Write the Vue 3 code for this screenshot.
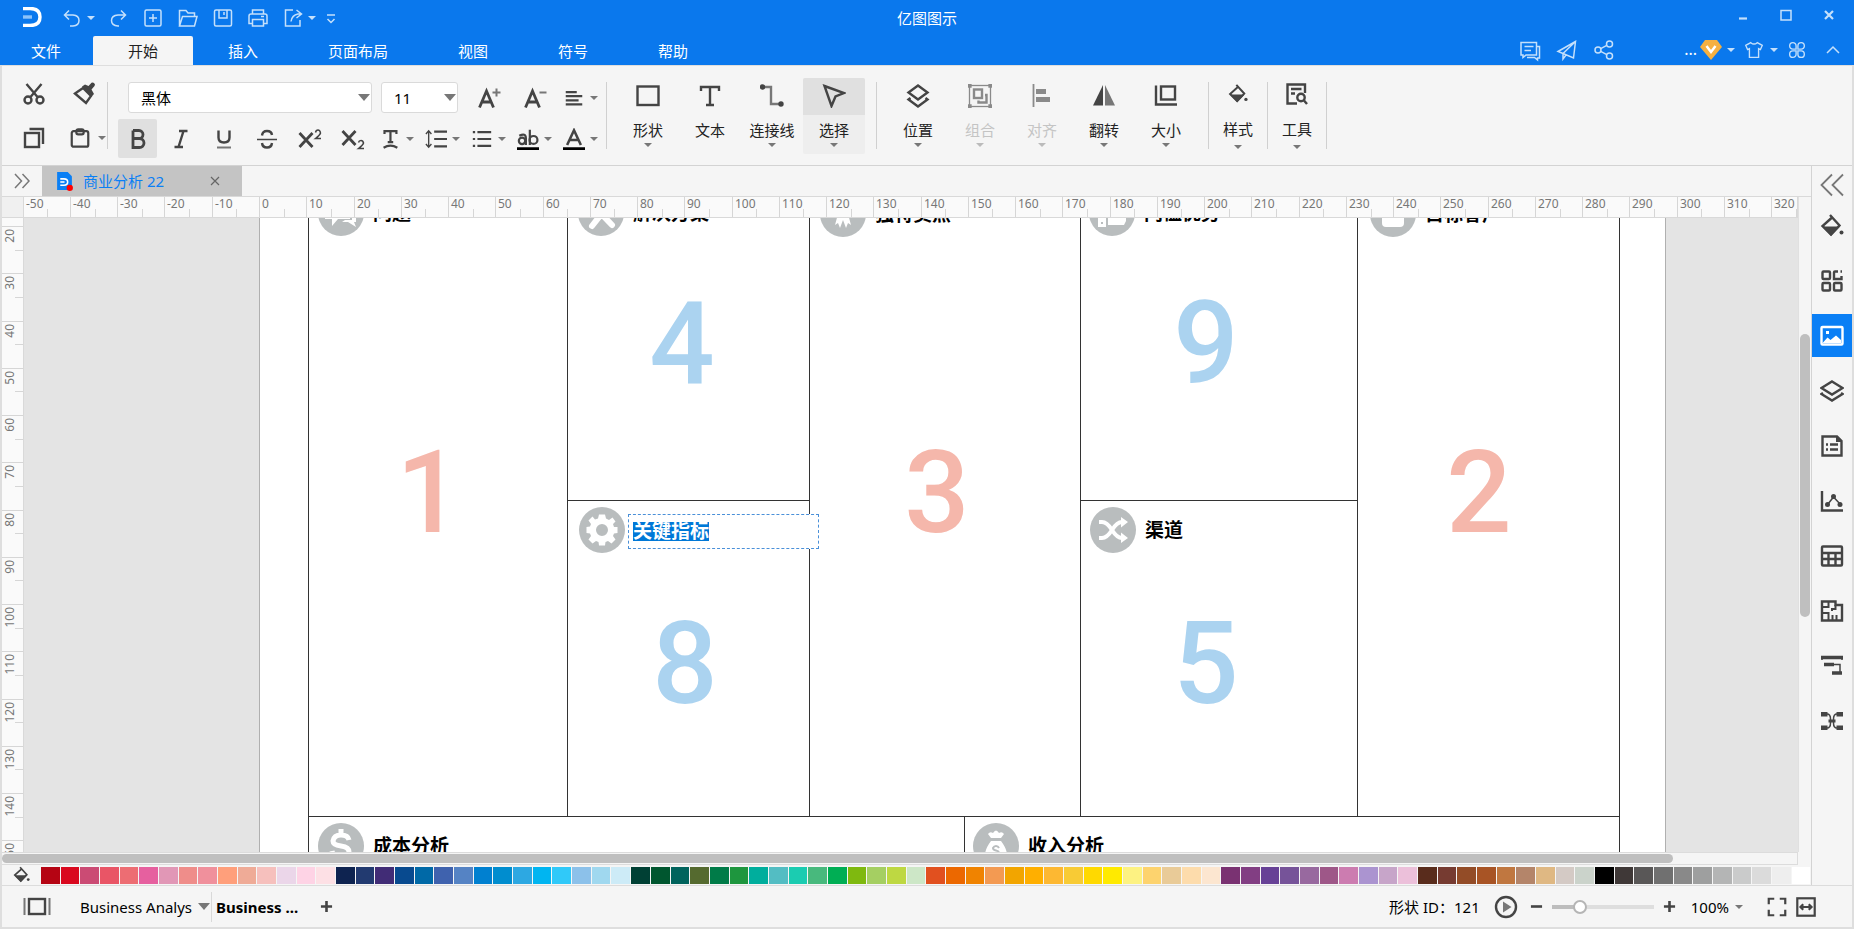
<script setup>
import { ref } from 'vue'

const quickTools = [
  { id: 'undo', label: '撤销', menu: true },
  { id: 'redo', label: '重做' },
  { id: 'new', label: '新建' },
  { id: 'open', label: '打开' },
  { id: 'save', label: '保存' },
  { id: 'print', label: '打印' },
  { id: 'export', label: '导出', menu: true },
]
const menus = ['文件', '开始', '插入', '页面布局', '视图', '符号', '帮助']
const activeMenu = ref('开始')
const font = ref('黑体')
const size = ref('11')
const zoom = ref(24)

const textTools = [
  { id: 'bold', label: '加粗', on: true },
  { id: 'italic', label: '斜体' },
  { id: 'underline', label: '下划线' },
  { id: 'strike', label: '删除线' },
  { id: 'sup', label: '上标' },
  { id: 'sub', label: '下标' },
]
const textMenus = [
  { id: 'tcurve', label: '文本效果' },
  { id: 'lineheight', label: '行距' },
  { id: 'list', label: '项目符号' },
  { id: 'highlight', label: '突出显示' },
  { id: 'fontcolor', label: '字体颜色' },
]
const drawTools = [
  { id: 'shape', label: '形状', menu: true },
  { id: 'text', label: '文本' },
  { id: 'connector', label: '连接线', menu: true },
  { id: 'select', label: '选择', menu: true, on: true },
]
const arrangeTools = [
  { id: 'position', label: '位置', menu: true },
  { id: 'group', label: '组合', menu: true, off: true },
  { id: 'align', label: '对齐', menu: true, off: true },
  { id: 'flip', label: '翻转', menu: true },
  { id: 'size', label: '大小', menu: true },
]
const railTools = [
  { id: 'bucket', label: '填充' },
  { id: 'symbols', label: '符号库' },
  { id: 'image', label: '图片', on: true },
  { id: 'layers', label: '图层' },
  { id: 'notes', label: '页面' },
  { id: 'chart', label: '图表' },
  { id: 'table', label: '表格' },
  { id: 'floor', label: '平面图' },
  { id: 'gantt', label: '甘特图' },
  { id: 'mind', label: '思维导图' },
]

const MM = 4.7256
const hMajor = []
const hMinor = []
for (let v = -50; v <= 320; v += 10) {
  hMajor.push({ v, p: Math.round(236 + v * MM) })
  hMinor.push(Math.round(236 + (v + 5) * MM))
}
const vMajor = []
const vMinor = []
for (let v = 20; v <= 150; v += 10) {
  vMajor.push({ v, p: Math.round(8 + (v - 20) * MM) })
  vMinor.push(Math.round(8 + (v - 15) * MM))
}

const lines = [
  'M308.5 0V929', 'M567.5 0V816', 'M809.5 0V816', 'M1080.5 0V816', 'M1357.5 0V816', 'M1619.5 0V929',
  'M567.5 500.5H809.5', 'M1080.5 500.5H1357.5', 'M308.5 816.5H1619.5', 'M964.5 816.5V929',
]
const topics = [
  { id: 't-chat', x: 341, y: 213, label: '问题' },
  { id: 't-tools', x: 601, y: 213, label: '解决方案' },
  { id: 't-award', x: 843, y: 214, label: '独特卖点' },
  { id: 't-thumb', x: 1112, y: 213, label: '门槛优势' },
  { id: 't-user', x: 1393, y: 214, label: '目标客户' },
  { id: 't-gear', x: 602, y: 530, label: '' },
  { id: 't-shuffle', x: 1113, y: 530, label: '渠道' },
  { id: 't-dollar', x: 341, y: 846, label: '成本分析' },
  { id: 't-bag', x: 996, y: 846, label: '收入分析' },
]
const numbers = [
  { n: '4', x: 682, y: 383, c: 'blue' },
  { n: '9', x: 1206, y: 383, c: 'blue' },
  { n: '1', x: 429, y: 532, c: 'red' },
  { n: '3', x: 937, y: 532, c: 'red' },
  { n: '2', x: 1479, y: 532, c: 'red' },
  { n: '8', x: 685, y: 703, c: 'blue' },
  { n: '5', x: 1206, y: 703, c: 'blue' },
]

const swatches = (
  'b50413 d9081e cb4b74 e95566 ed6d73 e6609f e197b6 ef8d8a f0909c ff9f7b efab97 f6c0bd ebd6e9 fed3e5 fde0e5 ' +
  '0e2350 223a70 412c76 084a8f 0069a7 3f62ae 5583c4 0080d0 008dcf 2da8e2 00b5f1 30c9f9 8cc1ea a0d8ef cdebf7 ' +
  '004034 00562f 00635c 556a2f 007b48 1e963e 00ae9d 53bdc3 1bccb1 48b97d 00ae54 7fb90f a5cf62 bed842 cde7c7 ' +
  'e1501f ec6800 f08300 f39a52 f2a500 ffaf00 fdb832 f8cb35 ffd900 ffea00 fdf282 fdd36e e9cb98 fddcac fce6d0 ' +
  '7a3272 823e83 674196 765399 98699f 9e5788 cc7cb0 ab94d0 c7a5c9 ecc0da ' +
  '592c1c 763b31 934c27 a85425 c07740 b4856a dfb883 d4cac5 cbd3cb ' +
  '000000 3f3837 595757 707070 898989 9e9f9f b4b5b5 cacbcb dbdbdb eeeeee ffffff'
).split(' ')
</script>

<template>
  <div class="app">
    <svg class="sprite" aria-hidden="true">
      <symbol id="undo" viewBox="0 0 24 24"><path d="M9 4.500L4.500 9L9 13.500M4.500 9H13Q19 9.500 19 14.500T13 20H10" /></symbol>
      <symbol id="redo" viewBox="0 0 24 24"><path d="M15 4.500L19.500 9L15 13.500M19.500 9H12Q5.500 9.500 5.500 14.500T12 20H13" /></symbol>
      <symbol id="new" viewBox="0 0 24 24"><rect x="4" y="4" width="16" height="16" rx="1.500" /><path d="M12 8V16M8 12H16" /></symbol>
      <symbol id="open" viewBox="0 0 24 24"><path d="M3.500 20V4.500H10L12 7H18.500V10M3.500 20L6.500 10.500H21L18.500 20Z" /></symbol>
      <symbol id="save" viewBox="0 0 24 24"><rect x="3.500" y="4" width="17" height="16" rx="1.500" /><path d="M8 4V12H16V4M13 6V9" /></symbol>
      <symbol id="print" viewBox="0 0 24 24"><path d="M6.500 8V4H17.500V8M6 17.500H3V10Q3 8 5 8H19Q21 8 21 10V17.500H18M6.500 13.500H17.500V20H6.500ZM15 10.500H18" /></symbol>
      <symbol id="export" viewBox="0 0 24 24"><path d="M12 4H4.500V20H19V14M15.500 4L20.500 8L15.500 12M20 8H17Q11 9 10 15.500" /></symbol>
      <symbol id="custom" viewBox="0 0 24 24"><path d="M8 9H16M8.500 13L12 16.500L15.500 13" /></symbol>
      <symbol id="comment" viewBox="0 0 24 24"><path d="M3 4.500H18.500V17H8L5 19.500V17H3ZM18.500 8.500H21.500V20H19.500V22L16.500 19.500H9M6.500 8.500H15.500M6.500 12.500H13" /></symbol>
      <symbol id="plane" viewBox="0 0 24 24"><path d="M20.500 3.500L3 13.500L8 15.500L18.500 20ZM20.500 3.500L8 15.500V21L11 17" /></symbol>
      <symbol id="share" viewBox="0 0 24 24"><circle cx="6" cy="12" r="3" /><circle cx="17.500" cy="6" r="3" /><circle cx="17.500" cy="18" r="3" /><path d="M8.700 10.600L14.800 7.400M8.700 13.400L14.800 16.600" /></symbol>
      <symbol id="shirt" viewBox="0 0 24 24"><path d="M8.500 4Q12 7 15.500 4L21 7L19 11.500L17 10.500V20H7V10.500L5 11.500L3 7Z" /></symbol>
      <symbol id="apps" viewBox="0 0 24 24"><path d="M11 11H7.500A3.500 3.500 0 1 1 11 7.500ZM13 11H16.500A3.500 3.500 0 1 0 13 7.500ZM11 13H7.500A3.500 3.500 0 1 0 11 16.500ZM13 13H16.500A3.500 3.500 0 1 1 13 16.500Z" /></symbol>

      <symbol id="cut" viewBox="0 0 24 24"><path d="M4.500 2L15.500 15M19.500 2L8.500 15" /><circle cx="6" cy="18" r="3.500" /><circle cx="18" cy="18" r="3.500" /></symbol>
      <symbol id="painter" viewBox="0 0 24 24"><path d="M3 11.500L11 6L19 14L14 21Z" /><path class="fillonly" d="M10 4.500L13 2.500L16.500 4L19.500 0.800Q22 0 23 2.500L22.500 4L19.500 7.500L22 12L19 15Z" /></symbol>
      <symbol id="copy" viewBox="0 0 24 24"><rect x="3" y="7" width="14" height="14" /><path d="M7.500 3H21V18" /></symbol>
      <symbol id="paste" viewBox="0 0 24 24"><rect x="3" y="4.500" width="18" height="17" rx="2" /><rect x="8" y="2.500" width="8" height="5.500" rx="2" /></symbol>
      <symbol id="grow" viewBox="0 0 24 24"><path class="fat" d="M2.500 21.500L9.500 5L16.500 21.500M5 16H14" /><path class="grey2" d="M19.500 2.500V10.500M15.500 6.500H23.500" /></symbol>
      <symbol id="shrink" viewBox="0 0 24 24"><path class="fat" d="M2.500 21.500L9.500 5L16.500 21.500M5 16H14" /><path class="grey2" d="M16.500 6.500H23.500" /></symbol>
      <symbol id="para" viewBox="0 0 24 24"><path d="M3 5.500H15M3 10H21M3 14.500H17M3 19H21" /></symbol>
      <symbol id="bold" viewBox="0 0 24 24"><path class="fat" d="M7 3.500V20.500H13.500A4.500 4.500 0 0 0 13.500 11.500H7M13 11.500A4 4 0 0 0 13 3.500H7" /></symbol>
      <symbol id="italic" viewBox="0 0 24 24"><path d="M10 4H18.500M5.500 20H14M14.500 4L9.500 20" /></symbol>
      <symbol id="underline" viewBox="0 0 24 24"><path d="M6.500 3.500V10.500Q6.500 15.500 12 15.500T17.500 10.500V3.500" /><path class="grey2" d="M5 20.500H19" /></symbol>
      <symbol id="strike" viewBox="0 0 24 24"><path d="M17 8Q16.500 4 12 4Q7.500 4 7 8.500M7 16Q7.500 20.500 12 20.500T17 16" /><path class="thin" d="M2 12.500H22" /></symbol>
      <symbol id="sup" viewBox="0 0 24 24"><path class="fat" d="M1.500 6L14.500 20M14.500 6L1.500 20" /><path class="thin" d="M17.500 5.500Q18 3 20 3T22.500 6Q22 8 17.500 11.500H23" /></symbol>
      <symbol id="sub" viewBox="0 0 24 24"><path class="fat" d="M1.500 4L14.500 18M14.500 4L1.500 18" /><path class="thin" d="M17.500 15.500Q18 13.500 20 13.500T22.500 16Q22 18 17.500 21.500H23" /></symbol>
      <symbol id="tcurve" viewBox="0 0 24 24"><path d="M6 6.500V3.500H19V6.500M12.500 4V15.500M9.500 15.500H15.500" /><path d="M5 21.500Q12.500 17 20 21.500" /></symbol>
      <symbol id="lineheight" viewBox="0 0 24 24"><path d="M10 4H24M10 12H24M10 20H24" /><path class="thin" d="M4 3V21M1 6.500L4 3L7 6.500M1 17.500L4 21L7 17.500" /></symbol>
      <symbol id="list" viewBox="0 0 24 24"><path d="M2 4.500H4.500M2 12H4.500M2 19.500H4.500M7 4.500H22M7 12H22M7 19.500H22" /></symbol>
      <symbol id="highlight" viewBox="0 0 24 24"><circle cx="5.500" cy="14" r="3.500" /><path d="M2.500 8.500Q9.500 5 9.700 11V18.500M14 2V18.500" /><circle cx="18" cy="13" r="4.300" /><path class="bar" d="M0 22.500H24" /></symbol>
      <symbol id="fontcolor" viewBox="0 0 24 24"><path class="fat" d="M4.500 18.500L12 2.500L19.500 18.500M7 13H17" /><path class="bar" d="M0 22.500H24" /></symbol>

      <symbol id="shape" viewBox="0 0 24 24"><rect x="1.500" y="2.500" width="21" height="18.500" /></symbol>
      <symbol id="text" viewBox="0 0 24 24"><path d="M3 7V3H21V7M12 3V21M8 21H16" /></symbol>
      <symbol id="connector" viewBox="0 0 24 24"><path class="grey" d="M3 3H11V20H20" /><circle class="solid" cx="2.500" cy="3" r="1.500" /><circle class="solid" cx="21" cy="20" r="1.500" /></symbol>
      <symbol id="select" viewBox="0 0 24 24"><path d="M2.500 2L22 9L13.500 12.500L9.500 22Z" /></symbol>
      <symbol id="position" viewBox="0 0 24 24"><path d="M12 1.500L21.500 8.500L12 15.500L2.500 8.500ZM4.500 14L2.500 15.500L12 22.500L21.500 15.500L19.500 14" /></symbol>
      <symbol id="group" viewBox="0 0 24 24"><g stroke-width="1.300"><rect x="1.500" y="1.500" width="21" height="21" /><path class="solid" d="M0 0H3V3H0ZM21 0H24V3H21ZM0 21H3V24H0ZM21 21H24V24H21Z" /></g><rect x="6" y="5.500" width="8" height="8.500" /><path d="M17 11H18.500V18.500H10.500V16.500" /></symbol>
      <symbol id="align" viewBox="0 0 24 24"><path d="M3.500 0V23" stroke-width="1.800" /><path class="fillonly" d="M6 5H16V10H6ZM6 13H20V18H6Z" /></symbol>
      <symbol id="flip" viewBox="0 0 24 24"><path class="fillonly" d="M11 1V21.500H1Z" /><path class="fillgrey" d="M13 1V21.500H23Z" /></symbol>
      <symbol id="size" viewBox="0 0 24 24"><rect x="7" y="2.500" width="14" height="13" /><path d="M2 1.500V20.500H23" /></symbol>
      <symbol id="bucket" viewBox="0 0 24 24"><path d="M10 1L19.500 11.500L11 20.500L2.500 12L11.500 4" /><path class="fillonly" d="M2.500 12.500H20L11 22Z" /><circle class="fillonly" cx="21.500" cy="18.500" r="2" /></symbol>
      <symbol id="tools" viewBox="0 0 24 24"><path d="M12 21.500H2.500V2.500H20V11M6 7H16.500M6 11.500H10" /><circle cx="16" cy="15.500" r="3.700" /><path d="M19 18.500L22 22" /></symbol>

      <symbol id="symbols" viewBox="0 0 24 24"><rect x="2.500" y="2.500" width="7.500" height="7.500" rx="1" /><rect x="2.500" y="14" width="7.500" height="7.500" rx="1" /><rect x="14" y="14" width="7.500" height="7.500" rx="1" /><path d="M18 2.500H15Q14 2.500 14 3.500V10H21.500V7M20.500 2.500H22" /></symbol>
      <symbol id="image" viewBox="0 0 24 24"><rect x="1.500" y="3" width="21" height="17.500" rx="1" /><path class="fillonly" d="M3 18.500L7.500 13.500L10.500 16L16 11.500L21 16V19H3ZM6 7H9V10H6Z" /></symbol>
      <symbol id="layers" viewBox="0 0 24 24"><path d="M12 2.500L22.500 9L12 15.500L1.500 9ZM3 14L1.500 15L12 21.500L22.500 15L21 14" /></symbol>
      <symbol id="notes" viewBox="0 0 24 24"><path d="M2.500 2.500H17L21.500 7V21.500H2.500ZM6 10.500H8M10 10.500H18M6 15.500H8M10 15.500H18" /><path class="fillonly" d="M16 2V8H22Z" /></symbol>
      <symbol id="chart" viewBox="0 0 24 24"><path d="M2 2V21.500H23" /><path class="thin" d="M8 15L13.500 8L20 15" /><circle class="fillonly" cx="7.500" cy="15.500" r="2.500" /><circle class="fillonly" cx="13.500" cy="7.500" r="2.500" /><circle class="fillonly" cx="20" cy="15.500" r="2.500" /></symbol>
      <symbol id="table" viewBox="0 0 24 24"><rect x="2" y="2.500" width="20" height="19" rx="1" /><path d="M2 9H22M2 15H22M8.500 9V21M15.500 9V21" /></symbol>
      <symbol id="floor" viewBox="0 0 24 24"><path d="M2 2.500H15.500V6H22V21.500H2Z" /><path d="M8.500 2.500V8H2M2 14H8.500V21.500M15.500 6V10H12V12M12.500 21.500V16M16.500 21.500V16" stroke-width="2" /></symbol>
      <symbol id="gantt" viewBox="0 0 24 24"><path class="bar2" d="M1 3.500H23M4 10.500H14M12 19H22" /><path class="thin" d="M14 10.500H20V18M2 3V6M22 3V6" /></symbol>
      <symbol id="mind" viewBox="0 0 24 24"><path class="fillonly" d="M1 3H7.500V7.500H1ZM16.500 3H23V7.500H16.500ZM1 16.500H7.500V21H1ZM16.500 16.500H23V21H16.500ZM8.500 10.500H15.500V13.500H8.500Z" /><path class="thin" d="M7 5Q10.500 5 10.500 10V14Q10.500 19 7 19M17 5Q13.500 5 13.500 10V14Q13.500 19 17 19" /></symbol>

      <symbol id="pages" viewBox="0 0 28 20"><rect x="6" y="2" width="16" height="15" /><path class="grey2" d="M1.500 1V18M26.500 1V18" /></symbol>
      <symbol id="play" viewBox="0 0 24 24"><circle cx="12" cy="12" r="10" /><path class="fillgrey" d="M9 6.500L17.500 12L9 17.500Z" /></symbol>
      <symbol id="full" viewBox="0 0 24 24"><path d="M3 9V3H9M15 3H21V9M21 15V21H15M9 21H3V15" /></symbol>
      <symbol id="fit" viewBox="0 0 24 24"><rect x="2.500" y="2.500" width="19" height="19" /><path d="M6 12H18M9 9L6 12L9 15M15 9L18 12L15 15" /></symbol>

      <symbol id="t-chat" viewBox="-23 -23 46 46"><path class="w" d="M-16 -12H9V6H-3L-9 13V6H-16Z" /><path class="w" d="M11 -5H15V9H13L15 14L7 9H1L4 7H11Z" /></symbol>
      <symbol id="t-tools" viewBox="-23 -23 46 46"><path class="ws" d="M-9 13L9 -10M-11 -11L11 12" /></symbol>
      <symbol id="t-award" viewBox="-23 -23 46 46"><circle class="w" cy="-7" r="8" /><path class="w" d="M-5 0L-8 11L-5 9L-3 14L0 6L3 14L5 9L8 11L5 0Z" /></symbol>
      <symbol id="t-thumb" viewBox="-23 -23 46 46"><path class="w" fill-rule="evenodd" d="M-14 -4H-6V14H-14ZM-11 9V11H-9V9ZM-4 -3L3 -14L6 -12L4 -5H14V8L12 12H-4Z" /></symbol>
      <symbol id="t-user" viewBox="-23 -23 46 46"><circle class="w" cy="-9" r="6" /><path class="w" d="M-11 9V4Q-11 -2 -5 -2H5Q11 -2 11 4V9Q11 13 7 13H-7Q-11 13 -11 9Z" /></symbol>
      <symbol id="t-gear" viewBox="-23 -23 46 46"><path class="w" fill-rule="evenodd" d="M-3 -15.500H3L4 -11.500L7 -10L10.500 -12.500L13.500 -8.500L11 -6L12 -3H15.500V3L12 3.500L11 6L13.500 9.500L9.500 13.500L6 11L3.500 12L3 15.500H-3L-3.500 12L-6 11L-9.500 13.500L-13.500 9.500L-11 6L-12 3.500L-15.500 3V-3L-12 -3.500L-11 -6L-13.500 -9.500L-9.500 -13.500L-7 -10.500L-4 -11.500ZM0 -6A6 6 0 1 0 0 6A6 6 0 1 0 0 -6Z" /></symbol>
      <symbol id="t-shuffle" viewBox="-23 -23 46 46"><path class="wl" d="M-14 -8H-11Q-6 -8 -1 0T9 8M-14 8H-11Q-6 8 -1 0T9 -8" /><path class="w" d="M8 -13L15 -8L8 -2.500ZM8 2.500L15 8L8 13Z" /></symbol>
      <symbol id="t-dollar" viewBox="-23 -23 46 46"><path class="wd" d="M8 -6Q7 -11 0 -11T-8 -5Q-8 -1 0 0T8 6Q8 11 0 11T-9 5M0 -17V-11M0 11V17" /></symbol>
      <symbol id="t-bag" viewBox="-23 -23 46 46"><path class="w" d="M-5 -8L-8 -12Q-6 -15 -3 -13Q0 -18 3 -13Q6 -15 8 -12L5 -8ZM-5 -5H5Q11 3 11 9Q11 14 6 14H-6Q-11 14 -11 9Q-11 3 -5 -5Z" /><path class="g" d="M3 2Q2 0 0 0T-3 2Q-3 4 0 4.500T3 7Q3 9 0 9T-3 7" /></symbol>
    </svg>

    <header class="title">
      <div class="title-row">
        <svg class="logo" viewBox="0 0 20 20"><path d="M1 1.500H8Q18 1.500 18 10T8 18.500H1" fill="none" stroke="#fff" stroke-width="3.400" /><path d="M1 10H10" stroke="#8cc3fa" stroke-width="3.400" /></svg>
        <nav class="quick">
          <button v-for="t in quickTools" :key="t.id" :aria-label="t.label">
            <svg class="i24"><use :href="'#' + t.id" /></svg><span v-if="t.menu" class="tri" />
          </button>
          <button aria-label="自定义" class="custom"><svg class="i24"><use href="#custom" /></svg></button>
        </nav>
        <h1>亿图图示</h1>
        <div class="win">
          <button aria-label="最小化"><svg viewBox="0 0 14 14"><path d="M3 10.500H11" /></svg></button>
          <button aria-label="最大化"><svg viewBox="0 0 14 14"><rect x="2" y="2.500" width="10" height="9.500" stroke-width="1.500" /></svg></button>
          <button aria-label="关闭"><svg viewBox="0 0 14 14"><path d="M3 3L11 11M11 3L3 11" /></svg></button>
        </div>
      </div>
      <div class="tab-row">
        <nav class="tabs">
          <button v-for="m in menus" :key="m" :class="{ on: m === activeMenu }" @click="activeMenu = m">{{ m }}</button>
        </nav>
        <div class="share">
          <button aria-label="评论"><svg class="i24"><use href="#comment" /></svg></button>
          <button aria-label="发送"><svg class="i24"><use href="#plane" /></svg></button>
          <button aria-label="分享"><svg class="i24"><use href="#share" /></svg></button>
        </div>
        <div class="account">
          <span class="dots">...</span>
          <button aria-label="会员" class="vip"><svg viewBox="0 0 22 20"><path d="M5 0H17L22 7L11 20L0 7Z" fill="#f5b041" /><path d="M6.500 6L11 12L15.500 6" fill="none" stroke="#fff" stroke-width="2.500" /></svg><span class="tri" /></button>
          <button aria-label="主题"><svg class="i22"><use href="#shirt" /></svg><span class="tri" /></button>
          <button aria-label="应用"><svg class="i22"><use href="#apps" /></svg></button>
          <button aria-label="收起功能区" class="fold"><svg viewBox="0 0 14 10"><path d="M1 8L7 2L13 8" /></svg></button>
        </div>
      </div>
    </header>

    <div class="frame">
      <section class="ribbon">
        <div class="clip">
          <button aria-label="剪切"><svg class="i24"><use href="#cut" /></svg></button>
          <button aria-label="格式刷"><svg class="i24"><use href="#painter" /></svg></button>
          <button aria-label="复制"><svg class="i24"><use href="#copy" /></svg></button>
          <button aria-label="粘贴" class="pasteb"><svg class="i22"><use href="#paste" /></svg><span class="tri" /></button>
        </div>
        <span class="sep" />
        <div class="fonts">
          <div class="line">
            <label class="combo wide"><select v-model="font" aria-label="字体"><option>黑体</option></select><span class="big" /></label>
            <label class="combo"><select v-model="size" aria-label="字号"><option>11</option></select><span class="big" /></label>
            <div class="menus push">
              <button aria-label="增大字号"><svg class="i24"><use href="#grow" /></svg></button>
              <button aria-label="减小字号"><svg class="i24"><use href="#shrink" /></svg></button>
              <button aria-label="段落对齐"><svg class="i22"><use href="#para" /></svg><span class="tri" /></button>
            </div>
          </div>
          <div class="line">
            <div class="toggles">
              <button v-for="t in textTools" :key="t.id" :aria-label="t.label" :class="{ on: t.on }"><svg class="i24"><use :href="'#' + t.id" /></svg></button>
            </div>
            <div class="menus push">
              <button v-for="t in textMenus" :key="t.id" :aria-label="t.label"><svg class="i22"><use :href="'#' + t.id" /></svg><span class="tri" /></button>
            </div>
          </div>
        </div>
        <span class="sep" />
        <div class="bigs">
          <button v-for="t in drawTools" :key="t.id" :class="{ on: t.on }">
            <span class="ico"><svg class="i24"><use :href="'#' + t.id" /></svg></span>{{ t.label }}<span class="tri" :class="{ none: !t.menu }" />
          </button>
        </div>
        <span class="sep" />
        <div class="bigs">
          <button v-for="t in arrangeTools" :key="t.id" :disabled="t.off">
            <span class="ico"><svg class="i24"><use :href="'#' + t.id" /></svg></span>{{ t.label }}<span class="tri" />
          </button>
        </div>
        <span class="sep" />
        <div class="bigs slim"><button><span class="ico"><svg class="i20"><use href="#bucket" /></svg></span>样式<span class="tri" /></button></div>
        <span class="sep" />
        <div class="bigs slim"><button><span class="ico"><svg class="i24"><use href="#tools" /></svg></span>工具<span class="tri" /></button></div>
        <span class="sep" />
      </section>

      <div class="work">
        <main class="doc">
          <div class="doctabs">
            <button class="expand" aria-label="展开面板"><svg viewBox="0 0 16 16"><path d="M1 1L7.500 8L1 15M8.500 1L15 8L8.500 15" /></svg></button>
            <div class="doctab">
              <svg class="docicon" viewBox="0 0 16 18"><path d="M1 0H11L15 4V17H1Z" fill="#0a7ff5" /><path d="M4 6.500H7.500Q11 6.500 11 9.500T7.500 12.500H4M4 9.500H8" fill="none" stroke="#fff" stroke-width="1.500" /><circle cx="13" cy="15" r="3" fill="#f00" /></svg>
              <span>商业分析 22</span>
              <button aria-label="关闭标签"><svg viewBox="0 0 10 10"><path d="M1 1L9 9M9 1L1 9" /></svg></button>
            </div>
          </div>
          <div class="board">
            <div class="corner" />
            <svg class="hruler">
              <g v-for="t in hMajor" :key="t.v"><rect :x="t.p - 1" y="0" width="1" height="20" /><text :x="t.p + 2" y="11">{{ t.v }}</text></g>
              <rect v-for="p in hMinor" :key="p" :x="p" y="12" width="1" height="8" />
            </svg>
            <svg class="vruler">
              <g v-for="t in vMajor" :key="t.v"><rect x="0" :y="t.p" width="22" height="1" /><text text-anchor="end" :transform="`translate(12 ${t.p + 3}) rotate(-90)`">{{ t.v }}</text></g>
              <rect v-for="p in vMinor" :key="p" x="13" :y="p" width="9" height="1" />
            </svg>
            <div class="canvas">
              <div class="sheet" />
              <svg class="drawing">
                <g transform="translate(-24 -218)">
                  <path v-for="d in lines" :key="d" :d="d" class="rule" />
                  <g v-for="t in topics" :key="t.id">
                    <circle :cx="t.x" :cy="t.y" r="23" class="disc" />
                    <use :href="'#' + t.id" :x="t.x - 23" :y="t.y - 23" width="46" height="46" />
                    <text class="topic" :x="t.x + 32" :y="t.y + 7">{{ t.label }}</text>
                  </g>
                  <text v-for="n in numbers" :key="n.n" class="num" :class="n.c" :x="n.x" :y="n.y">{{ n.n }}</text>
                </g>
              </svg>
              <div class="editing" contenteditable="true"><span>关键指标</span></div>
            </div>
            <div class="vscroll"><div class="vthumb" /></div>
            <div class="hscroll"><div class="hthumb" /></div>
          </div>
          <div class="palette">
            <svg class="pick"><use href="#bucket" /></svg>
            <div class="chips"><button v-for="c in swatches" :key="c" :aria-label="c" :style="{ background: '#' + c }" /></div>
          </div>
        </main>
        <aside class="rail">
          <button class="back" aria-label="展开"><svg viewBox="0 0 24 24"><path d="M12 1.500L1.500 12L12 22.500M23 1.500L12.500 12L23 22.500" /></svg></button>
          <button v-for="t in railTools" :key="t.id" :aria-label="t.label" :class="{ on: t.on }"><svg class="i24"><use :href="'#' + t.id" /></svg></button>
        </aside>
      </div>

      <footer class="status">
        <button aria-label="页面列表" class="pagesbtn"><svg><use href="#pages" /></svg></button>
        <button class="pg">Business Analys<span class="big" /></button>
        <button class="pg current">Business ...</button>
        <button class="plus" aria-label="新建页面"><svg viewBox="0 0 14 14"><path d="M1 7H13M7 1V13" /></svg></button>
        <span class="fill" />
        <span class="sid">形状 ID：121</span>
        <button aria-label="播放" class="playbtn"><svg class="i24"><use href="#play" /></svg></button>
        <button class="zb" aria-label="缩小"><svg viewBox="0 0 14 14"><path d="M1 7H13" /></svg></button>
        <input v-model="zoom" type="range" aria-label="缩放" />
        <button class="zb" aria-label="放大"><svg viewBox="0 0 14 14"><path d="M1 7H13M7 1V13" /></svg></button>
        <button class="pct">100%<span class="tri" /></button>
        <button aria-label="全屏"><svg class="i22"><use href="#full" /></svg></button>
        <button aria-label="适应宽度" class="fitb"><svg class="i22"><use href="#fit" /></svg></button>
      </footer>
    </div>
  </div>
</template>

<style>
html, body { margin: 0; overflow: hidden; }
</style>

<style scoped>
.app {
  height: 100vh; display: flex; flex-direction: column; overflow: hidden;
  font: 15px/20px "Noto Sans", "Noto Sans CJK SC", sans-serif; color: #222; background: #f5f5f5;
}
.sprite { position: absolute; width: 0; height: 0; }
button { font: inherit; color: inherit; background: none; border: 0; padding: 0; display: flex; align-items: center; justify-content: center; }
svg { fill: none; stroke: currentColor; stroke-width: 2.400; flex: none; }
.thin { stroke-width: 1.500; }
.fat { stroke-width: 2.800; }
.grey { stroke: #777; }
.grey2 { stroke: #777; stroke-width: 2; }
.solid { fill: currentColor; }
.fillonly { fill: currentColor; stroke: none; }
.fillgrey { fill: #777; stroke: none; }
.bar { stroke: #000; stroke-width: 3; }
.bar2 { stroke-width: 3.500; }
.w { fill: #fff; stroke: none; }
.ws { stroke: #fff; stroke-width: 6; stroke-linecap: round; }
.wl { stroke: #fff; stroke-width: 4; }
.wd { stroke: #fff; stroke-width: 5; }
.g { stroke: #b9bdbe; stroke-width: 2; }
.i20 { width: 20px; height: 20px; }
.i22 { width: 22px; height: 22px; }
.i24 { width: 24px; height: 24px; }
.tri { border: solid transparent; border-width: 4px 4px 0; border-top-color: #777; width: 0; flex: none; }
.big { border: solid transparent; border-width: 7px 6px 0; border-top-color: #777; width: 0; flex: none; }
.none { visibility: hidden; }

.title { background: #0a78ed; color: #fff; height: 65px; display: flex; flex-direction: column; flex: none; }
.title svg { stroke-width: 1.500; color: #c5e0fb; }
.title .tri { border-top-color: #c5e0fb; }
.title-row { height: 36px; display: grid; grid-template-columns: 1fr auto 1fr; position: relative; }
.logo { width: 20px; height: 20px; position: absolute; left: 22px; top: 7px; }
.quick { display: flex; align-items: center; gap: 11px; padding-left: 60px; }
.quick button { gap: 3px; }
.quick .custom { margin-left: -8px; }
h1 { margin: 0; font-size: 15px; font-weight: 400; line-height: 36px; }
.win { display: flex; justify-content: flex-end; gap: 29px; padding-right: 18px; height: 30px; }
.win svg { width: 14px; height: 14px; stroke-width: 2.200; }
.tab-row { display: flex; flex: 1; }
.tabs { display: flex; flex: 1; }
.tabs button { padding: 0 35px; }
.tabs button:first-child { padding: 0 32px 0 31px; }
.tabs .on { background: #f5f5f5; color: #222; border-radius: 2px 2px 0 0; }
.share { display: flex; gap: 13px; margin-right: 68px; padding-bottom: 2px; }
.account { display: flex; gap: 8px; padding: 0 14px 2px 0; }
.account button { gap: 5px; }
.dots { line-height: 27px; font-size: 16px; margin-right: 4px; }
.vip svg { width: 22px; height: 20px; stroke: none; }
.vip { margin-left: -9px; }
.fold { margin-left: 10px; }
.fold svg { width: 14px; height: 10px; }

.frame { flex: 1; min-height: 0; display: flex; flex-direction: column; border: solid #dedede; border-width: 1px 2px 2px; }
.ribbon { height: 100px; flex: none; display: flex; color: #444; border-bottom: 1px solid #d3d3d3; padding-top: 12px; box-sizing: border-box; }
.sep { width: 1px; height: 67px; background: #d0d0d0; margin-top: 4px; flex: none; }
.clip { display: grid; grid-template-columns: 24px 35px; gap: 20px 26px; align-content: start; padding: 4px 0 0 20px; }
.clip button { justify-content: flex-start; }
.pasteb { gap: 7px; margin-left: -3px; }
.fonts { display: flex; flex-direction: column; gap: 6px; padding: 4px 8px 0 10px; }
.line { display: flex; align-items: center; }
.combo { position: relative; display: flex; align-items: center; width: 77px; }
.combo.wide { width: 244px; margin: 0 9px 0 10px; }
.combo select { appearance: none; width: 100%; height: 31px; font: inherit; color: #000; background: #fff; border: 1px solid #dadada; border-radius: 3px; padding: 0 12px; }
.combo .big { position: absolute; right: 2px; }
.push { margin-left: auto; }
.menus { display: flex; gap: 11px; }
.menus button { width: 35px; gap: 5px; }
.toggles { display: flex; gap: 4px; margin-right: 7px; }
.toggles button { width: 39px; height: 39px; border-radius: 2px; }
.toggles .on { background: #e0e0e0; }
.bigs { display: flex; padding: 0 11px 0 10px; color: #222; }
.bigs button { width: 62px; height: 76px; flex-direction: column; justify-content: flex-start; border-radius: 2px; overflow: hidden; }
.bigs .ico { width: 100%; height: 37px; margin-bottom: 5px; padding-bottom: 2px; box-sizing: border-box; display: flex; align-items: center; justify-content: center; color: #444; }
.bigs .tri { margin-top: 3px; }
.bigs .on { background: #eee; }
.bigs .on .ico { background: #e0e0e0; }
.bigs button:disabled { color: #c4c4c4; }
.bigs button:disabled .ico { color: #8a8a8a; }
.bigs button:disabled .tri { border-top-color: #bbb; }
.slim { padding: 0; }
.slim button { width: 58px; }
.slim .ico { height: 33px; margin-bottom: 8px; }
.slim .tri { margin-top: 6px; }

.work { flex: 1; min-height: 0; display: flex; border-bottom: 1px solid #dcdcdc; }
.doc { flex: 1; min-width: 0; display: flex; flex-direction: column; }
.doctabs { height: 30px; flex: none; display: flex; }
.expand { width: 40px; color: #777; }
.expand svg { width: 16px; height: 16px; stroke-width: 1.500; }
.doctab { width: 200px; background: #c4c4c4; display: flex; align-items: center; color: #0a7ff5; padding: 0 22px 0 14px; box-sizing: border-box; }
.docicon { width: 17px; height: 19px; stroke: none; margin-right: 10px; }
.doctab button { margin-left: auto; color: #666; }
.doctab button svg { width: 10px; height: 10px; stroke-width: 1.200; }
.board { flex: 1; min-height: 0; display: grid; grid-template: 21px 1fr 13px / 22px 1fr 13px; border-top: 1px solid #d9d9d9; }
.corner { background: #f0f0f0; border: solid #d9d9d9; border-width: 0 1px 1px 0; }
.hruler, .vruler { width: 100%; height: 100%; background: #fafafa; font-size: 12px; box-sizing: border-box; overflow: hidden; }
.hruler { border-bottom: 1px solid #d9d9d9; border-right: 1px solid #d9d9d9; }
.vruler { grid-area: 2 / 1; border-right: 1px solid #d9d9d9; }
.hruler rect, .vruler rect { fill: #d6d6d6; stroke: none; }
.hruler text, .vruler text { fill: #777; stroke: none; }
.canvas { grid-area: 2 / 2; position: relative; overflow: hidden; background: #e4e4e4; }
.sheet { position: absolute; left: 235px; top: 0; bottom: 0; width: 1405px; background: #fff; border: solid #b0b0b0; border-width: 0 1px; }
.drawing { position: absolute; inset: 0; width: 100%; height: 100%; }
.rule { stroke: #333; stroke-width: 1; }
.disc { fill: #b9bdbe; stroke: none; }
.topic { fill: #000; stroke: none; font-size: 19px; font-weight: 700; }
.num { stroke: none; font-family: Roboto, sans-serif; font-size: 115px; font-weight: 500; text-anchor: middle; }
.blue { fill: #abd3f0; }
.red { fill: #f5b7ab; }
.editing { position: absolute; left: 604px; top: 296px; width: 191px; height: 35px; box-sizing: border-box; border: 1px dashed #4a90d9; background: #fff; padding: 7px 4px; color: #fff; font-size: 19px; font-weight: 700; line-height: 19px; outline: none; }
.editing span { background: #0078d7; display: inline-block; height: 19px; }
.vscroll { grid-area: 1 / 3 / 3 / 4; border-left: 1px solid #e0e0e0; display: flex; justify-content: center; padding: 137px 0 235px; }
.vthumb { width: 10px; background: #bfbfbf; border-radius: 5px; }
.hscroll { grid-area: 3 / 1 / 4 / 3; border: solid #dcdcdc; border-width: 1px 1px 1px 0; padding: 1px 124px 1px 0; display: flex; }
.hthumb { flex: 1; background: #bfbfbf; border-radius: 5px; }
.palette { height: 20px; flex: none; display: flex; align-items: center; color: #444; }
.pick { width: 17px; height: 18px; margin: 0 11px; }
.chips { flex: 1; display: flex; gap: 1px; height: 17px; }
.chips button { flex: 1; }

.rail { width: 40px; flex: none; border-left: 1px solid #d3d3d3; color: #444; display: flex; flex-direction: column; gap: 12px; }
.rail button { height: 43px; flex: none; }
.rail .back { height: 38px; margin-bottom: -12px; color: #777; }
.rail .back svg { width: 24px; height: 24px; stroke-width: 1.800; }
.rail .on { background: #0a7ff5; color: #fff; }

.status { height: 41px; flex: none; display: flex; align-items: center; color: #444; }
.pagesbtn { margin: 0 29px 0 21px; }
.pagesbtn svg { width: 28px; height: 20px; }
.pg { color: #000; height: 30px; gap: 6px; }
.pg.current { font-weight: 700; border-left: 1px solid #d9d9d9; padding-left: 4px; margin-left: 1px; }
.plus { margin-left: 22px; }
.plus svg, .zb svg { width: 13px; height: 13px; stroke-width: 2.800; }
.fill { flex: 1; }
.sid { color: #000; margin-right: 14px; }
.playbtn { margin-right: 12px; }
input[type="range"] { appearance: none; width: 102px; height: 14px; margin: 0 9px; background: linear-gradient(#bdbdbd, #bdbdbd) 0 5px / 26px 4px no-repeat, linear-gradient(#dedede, #dedede) 0 5px / 100% 4px no-repeat; }
input[type="range"]::-webkit-slider-thumb { appearance: none; width: 14px; height: 14px; border-radius: 50%; background: #fff; border: 2px solid #b5b5b5; }
.pct { color: #000; margin: 0 23px 0 15px; gap: 6px; }
.fitb { margin: 0 35px 0 7px; }
</style>
